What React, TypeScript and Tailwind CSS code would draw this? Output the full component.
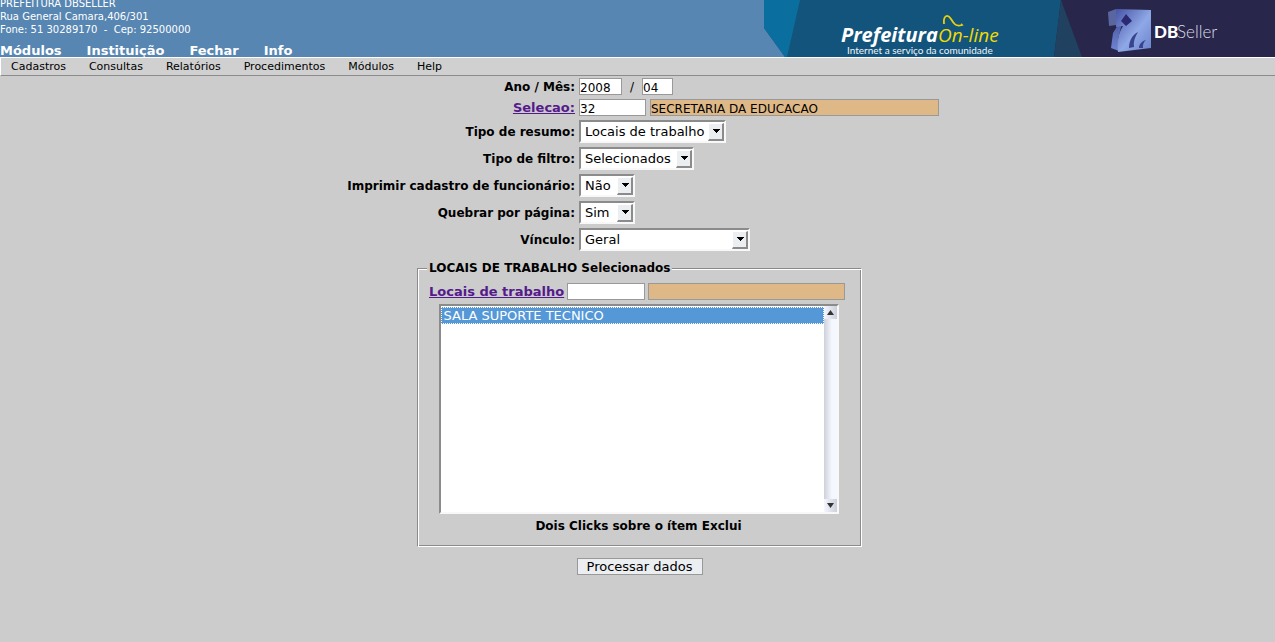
import React, { useState } from "react";

const fieldBase =
  "h-[17px] border border-[#999999] pt-[2px] text-[12px] leading-[13px] outline-none";
const field = `${fieldBase} bg-white`;
const lookup = `${fieldBase} bg-[#deb887]`;
const label = "text-right text-[12px] font-bold leading-4 whitespace-nowrap";
const link = "text-[13px] font-bold leading-4 text-[#551a8b] underline";

function Dropdown({ id, width, options }: { id: string; width: string; options: string[] }) {
  return (
    <div className={`grid h-[23px] ${width}`}>
      <select
        id={id}
        className="col-start-1 row-start-1 w-full appearance-none border-2 border-t-[#8b8b8b] border-r-[#f8f8f8] border-b-[#f8f8f8] border-l-[#8b8b8b] bg-white pl-1 text-[13px] leading-4 outline-none"
      >
        {options.map((o) => (
          <option key={o}>{o}</option>
        ))}
      </select>
      <span className="pointer-events-none col-start-1 row-start-1 mr-[2px] flex h-[18px] w-4 items-center justify-center self-center justify-self-end border border-r-2 border-b-2 border-t-white border-r-[#8b8b8b] border-b-[#8b8b8b] border-l-white bg-[#eceff2]">
        <svg width="8" height="4" viewBox="0 0 8 4" shapeRendering="crispEdges" aria-hidden="true">
          <path d="M0 0h8L4 4z" fill="#000" />
        </svg>
      </span>
    </div>
  );
}

function Banner() {
  return (
    <svg width="511" height="57" viewBox="764 0 511 57" className="shrink-0" role="img" aria-label="Prefeitura On-line">
      <defs>
        <linearGradient id="front" x1="0" y1="0" x2="1" y2="1">
          <stop offset="0" stopColor="#4653a6" />
          <stop offset=".55" stopColor="#8fa8e6" />
          <stop offset="1" stopColor="#6b82cc" />
        </linearGradient>
        <linearGradient id="side" x1="0" y1="0" x2="0" y2="1">
          <stop offset="0" stopColor="#3d4790" />
          <stop offset="1" stopColor="#6f86d2" />
        </linearGradient>
      </defs>
      <path d="M764 0h511v57H785L764 28z" fill="#12547c" />
      <path d="M764 0h36l-13 57h-2L764 28z" fill="#0a6f9f" />
      <path d="M1061 0h214v57H1054z" fill="#28264a" />
      <path d="M1061 0l21 57h-28z" fill="#20415f" />
      <text x="841" y="42" fontFamily="Open Sans, sans-serif" fontSize="20" fontWeight="700" fontStyle="italic" fill="#fff">Prefeitura</text>
      <text x="938" y="42" fontFamily="Open Sans, sans-serif" fontSize="19" fontStyle="italic" fill="#f2da00">On-line</text>
      <path d="M944 24c-1-9 4-10 7-5s5 8 11 6l-1-1" fill="none" stroke="#e9d20b" strokeWidth="1.8" />
      <text x="847" y="54" fontFamily="Lato, sans-serif" fontSize="10" fill="#f0f5f8">Internet a serviço da comunidade</text>
      <path d="M1108 12l8-3v16l-7 1z" fill="#59669f" />
      <path d="M1116 9l9 2-4 16-3 12 1 12-8-3 2-15 5-8z" fill="url(#side)" />
      <path d="M1116 9l35 1v38l-33 4c-1-10 0-18 5-26l-7 1z" fill="url(#front)" />
      <path d="M1126 14l6 7-6 5-5-5z" fill="#2b2a70" />
      <path d="M1129 48c0-7 3-13 9-16-3 5-5 10-4 15z" fill="#39448f" />
      <path d="M1139 48c0-4 3-7 7-8-3 3-3 5-3 8z" fill="#39448f" />
      <text x="1154" y="38" fontFamily="Lato, sans-serif" fontSize="17" fontWeight="900" fill="#fff">DB</text>
      <text x="1177" y="38" fontFamily="Lato, sans-serif" fontSize="17" fontWeight="300" fill="#dcdce8">Seller</text>
    </svg>
  );
}

export default function App() {
  const [locais, setLocais] = useState<string[]>(["SALA SUPORTE TECNICO"]);
  return (
    <div className="min-h-screen bg-[#cccccc] font-['DejaVu_Sans',sans-serif] text-black">
      <header className="flex h-[57px] justify-between overflow-hidden bg-[#5786b2] text-white">
        <div className="whitespace-nowrap">
          <div className="-mt-[3px] text-[10px] leading-[13px]">
            <p>PREFEITURA DBSELLER</p>
            <p>Rua General Camara,406/301</p>
            <p className="whitespace-pre">Fone: 51 30289170  -  Cep: 92500000</p>
          </div>
          <nav className="mt-2 flex gap-[25px] text-[13px] font-bold leading-[13px]">
            {["Módulos", "Instituição", "Fechar", "Info"].map((t) => (
              <a key={t} href="#">{t}</a>
            ))}
          </nav>
        </div>
        <Banner />
      </header>
      <nav className="flex h-[19px] gap-[23px] border border-r-0 border-t-white border-b-[#8b8b8b] border-l-white bg-[#d0d0d0] pl-[10px] text-[11px] leading-[17px]">
        {["Cadastros", "Consultas", "Relatórios", "Procedimentos", "Módulos", "Help"].map((t) => (
          <a key={t} href="#">{t}</a>
        ))}
      </nav>

      <form className="flex flex-col items-center pt-[2px] pl-1" onSubmit={(e) => e.preventDefault()}>
        <div className="grid grid-cols-[233px_360px] items-center gap-x-1 gap-y-1 pl-[2px]">
          <label htmlFor="ano" className={label}>Ano / Mês:</label>
          <div className="flex items-center text-[12px] leading-4">
            <input id="ano" className={`${field} w-[43px]`} defaultValue="2008" />
            <span className="w-5 text-center">/</span>
            <input aria-label="Mês" className={`${field} w-[31px]`} defaultValue="04" />
          </div>
          <div className={label}><a href="#" className={link}>Selecao:</a></div>
          <div className="flex gap-1">
            <input aria-label="Selecao" className={`${field} w-[67px]`} defaultValue="32" />
            <input aria-label="Descrição da seleção" readOnly className={`${lookup} min-w-0 flex-1`} defaultValue="SECRETARIA DA EDUCACAO" />
          </div>
          <label htmlFor="resumo" className={label}>Tipo de resumo:</label>
          <Dropdown id="resumo" width="w-[147px]" options={["Locais de trabalho"]} />
          <label htmlFor="filtro" className={label}>Tipo de filtro:</label>
          <Dropdown id="filtro" width="w-[115px]" options={["Selecionados"]} />
          <label htmlFor="imprimir" className={label}>Imprimir cadastro de funcionário:</label>
          <Dropdown id="imprimir" width="w-14" options={["Não", "Sim"]} />
          <label htmlFor="quebrar" className={label}>Quebrar por página:</label>
          <Dropdown id="quebrar" width="w-14" options={["Sim", "Não"]} />
          <label htmlFor="vinculo" className={label}>Vínculo:</label>
          <Dropdown id="vinculo" width="w-[171px]" options={["Geral"]} />
        </div>

        <fieldset className="mt-[9px] flex w-[445px] flex-col items-center border border-t-[#8b8b8b] border-r-white border-b-white border-l-[#8b8b8b] pr-3 pb-3 pl-[10px] shadow-[inset_1px_1px_#ffffff,inset_-1px_-1px_#8b8b8b]">
          <legend className="-ml-px bg-[#cccccc] px-[2px] text-[12px] font-bold leading-4">LOCAIS DE TRABALHO Selecionados</legend>
          <div className="mt-[7px] flex w-full items-center gap-[3px] pl-px">
            <a href="#" className={`${link} whitespace-nowrap`}>Locais de trabalho</a>
            <input aria-label="Código do local" className={`${field} w-[78px]`} />
            <input aria-label="Descrição do local" readOnly className={`${lookup} w-[197px]`} />
          </div>
          <div className="mt-1 flex h-[210px] w-[400px] border-2 border-t-[#8b8b8b] border-r-[#f8f8f8] border-b-[#f8f8f8] border-l-[#8b8b8b] bg-white">
            <select
              multiple
              aria-label="Locais de trabalho selecionados"
              value={locais}
              onChange={(e) => setLocais(Array.from(e.target.selectedOptions, (o) => o.value))}
              className="min-w-0 flex-1 overflow-hidden py-px text-[13px] leading-4 outline-none"
            >
              <option className="h-[17px] border border-dotted border-white px-[2px] py-0 leading-[15px] checked:bg-[#5598d7]! checked:bg-[linear-gradient(#5598d7,#5598d7)]! checked:text-white!">
                SALA SUPORTE TECNICO
              </option>
            </select>
            <div aria-hidden="true" className="flex w-[13px] flex-col justify-between bg-linear-to-r from-[#cdd0da] to-[#f5f7ff] to-60%">
              {["M0 5h7L3.5 0z", "M0 0h7L3.5 5z"].map((d) => (
                <span key={d} className="flex h-[13px] items-center justify-center bg-linear-to-r from-[#f5f7ff] to-[#cdd0da]">
                  <svg width="7" height="5" viewBox="0 0 7 5"><path d={d} fill="#333" /></svg>
                </span>
              ))}
            </div>
          </div>
          <p className="mt-1 text-[12px] font-bold leading-4">Dois Clicks sobre o ítem Exclui</p>
        </fieldset>
        <button type="submit" className="mt-[11px] h-[17px] w-[126px] border border-[#999999] bg-[#eceff2] pt-px text-[13px] leading-[14px]">
          Processar dados
        </button>
      </form>
    </div>
  );
}
